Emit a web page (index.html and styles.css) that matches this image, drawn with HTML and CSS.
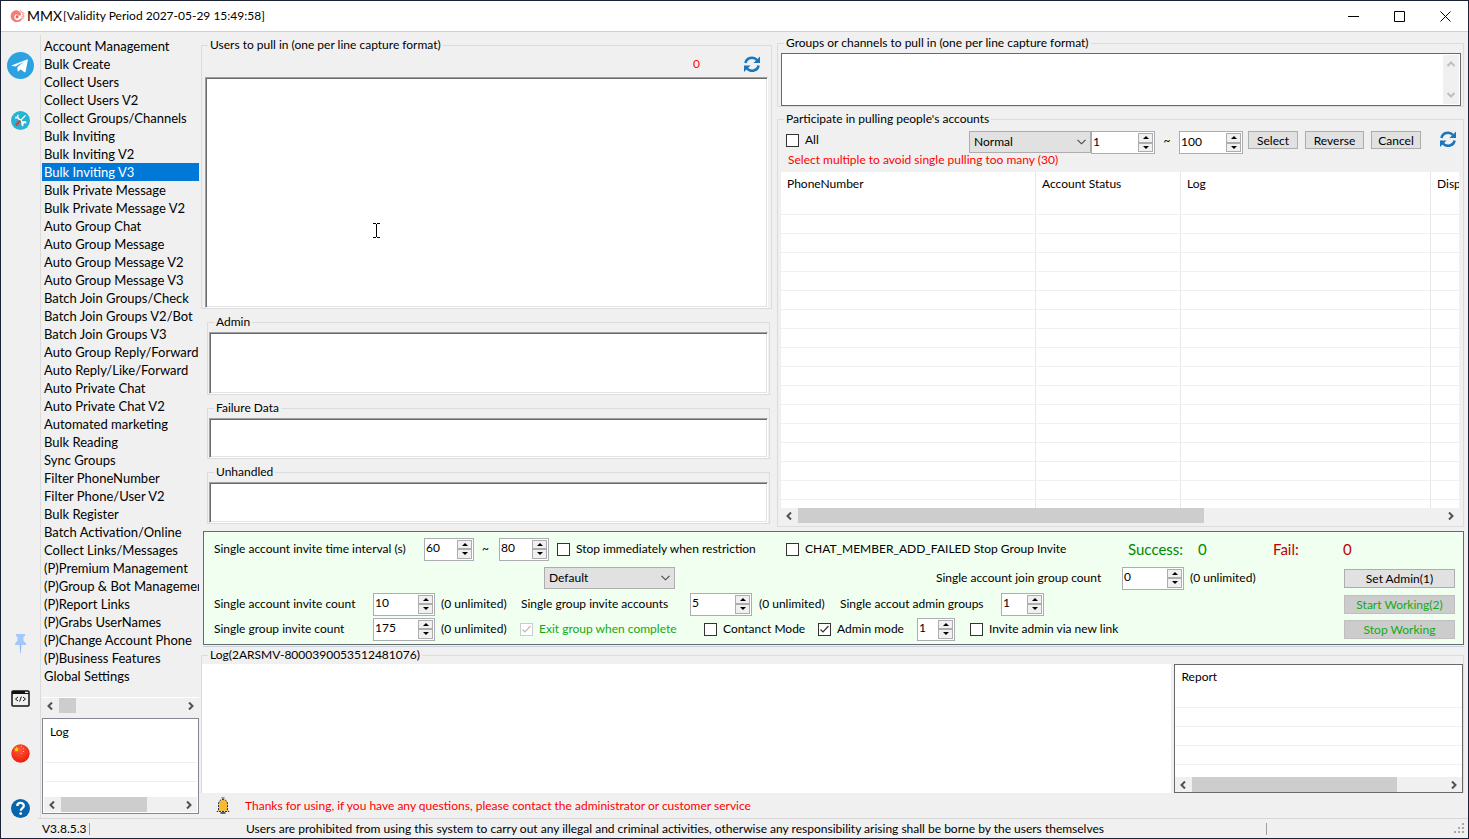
FILE: index.html
```html
<!DOCTYPE html>
<html lang="en">
<head>
    <meta charset="UTF-8">
    <meta name="viewport" content="width=device-width, initial-scale=1.0">
    <title>MMX</title>
    <link rel="stylesheet" href="styles.css">
</head>
<body>

<!-- shared icons -->
<svg class="sprite" aria-hidden="true">
  <symbol id="refresh" viewBox="0 0 16 16">
    <path d="M1.5 7a6.5 6 0 0 1 11.5-3" fill="none" stroke="#1b75bb" stroke-width="2.6"/>
    <path d="M16 0.5v6.5h-6.5z" fill="#1b75bb"/>
    <path d="M14.5 9.500a6.500 6 0 0 1-11.500 3" fill="none" stroke="#1b75bb" stroke-width="2.6"/>
    <path d="M0 16v-6.500h6.500z" fill="#1b75bb"/>
  </symbol>
  <symbol id="left" viewBox="0 0 8 8"><path d="M6 0.500 2.500 4 6 7.500" fill="none" stroke="#505050" stroke-width="2"/></symbol>
  <symbol id="right" viewBox="0 0 8 8"><path d="M2 0.500 5.500 4 2 7.500" fill="none" stroke="#505050" stroke-width="2"/></symbol>
  <symbol id="up" viewBox="0 0 8 8"><path d="M0.500 6 4 2.500 7.500 6" fill="none" stroke="#bfbfbf" stroke-width="2"/></symbol>
  <symbol id="down" viewBox="0 0 8 8"><path d="M0.500 2 4 5.500 7.500 2" fill="none" stroke="#bfbfbf" stroke-width="2"/></symbol>
</svg>

<header class="titlebar">
  <svg class="logo" viewBox="0 0 16 14">
    <path d="M5 1C2 2 0 5 1 9c1 3 4 5 7 4.500 3-.5 5-2.500 5-4.500l-2 1c-1 1.500-4 2-5.500.5C4 9 4.500 6 6.500 5.500 8 5 9 6 9 7l3-1C12 3 9 0 5 1z" fill="#f08078"/>
    <path d="M6.500 6.500c1.500-.8 3 .5 2.500 2-.5 1.200-2.500 1.200-3 0" fill="#e8605c"/>
    <path d="M11 1l1.500 2L15 4l-1.500 1.500L15 7l-3 1M13 9l2 .5" fill="none" stroke="#f3a29b" stroke-width="1.200"/>
  </svg>
  <h1>MMX</h1>
  <span class="validity">[Validity Period 2027-05-29 15:49:58]</span>
  <div class="window-buttons">
    <button type="button" aria-label="Minimize"><svg viewBox="0 0 11 11"><path d="M0 5.500h11"/></svg></button>
    <button type="button" aria-label="Maximize"><svg viewBox="0 0 11 11"><path d="M.5.5h10v10h-10z"/></svg></button>
    <button type="button" aria-label="Close"><svg viewBox="0 0 11 11"><path d="M.5.5l10 10M10.500.5l-10 10"/></svg></button>
  </div>
</header>

<div class="window">
  <nav class="iconbar">
    <button type="button" class="big" aria-label="Telegram">
      <svg viewBox="0 0 27 27"><circle cx="13.500" cy="13.500" r="13.500" fill="#2ca3e0"/><path d="M5 13.300 20 7.600c.8-.3 1 .2.8 1L18.600 19.500c-.2.9-.8 1-1.500.6l-3.600-2.800-2 2c-.4.4-.8.2-.8-.4l-.4-3.700L17 9.600l-8.600 5-3.400-.7c-.6-.2-.6-.4 0-.6z" fill="#fff"/></svg>
    </button>
    <button type="button" aria-label="Tools">
      <svg viewBox="0 0 19 19"><circle cx="9.500" cy="9.500" r="9.500" fill="#27b4d3"/><path d="M6 6l7 7" stroke="#fff" stroke-width="1.600"/><path d="M4.200 6.500a2 2 0 0 0 2.600-2.600M12.300 14.700a2 2 0 1 1 2.600-2.600" fill="none" stroke="#fff" stroke-width="1.600"/><path d="M14.500 4.300 9.500 9.500" stroke="#fff" stroke-width="1.200"/><path d="M8.600 10.400 5.600 13.500" stroke="#e2403a" stroke-width="2.800" stroke-linecap="round"/></svg>
    </button>
    <button type="button" class="pin" aria-label="Pin">
      <svg viewBox="0 0 19 19"><path d="M5 0h9v2l-1.500 1v3.500l2.500 3V11h-11V9.500l2.500-3V3L5 2z" fill="#a3c7fb"/><path d="M8.700 11h1.600L9.800 19h-.6z" fill="#8fb6f2"/></svg>
    </button>
    <button type="button" aria-label="Console">
      <svg viewBox="0 0 19 19"><rect x="1" y="2" width="17" height="15" rx="1" fill="none" stroke="#111" stroke-width="1.500"/><path d="M1 3h13" stroke="#111" stroke-width="2"/><path d="M1 4.500h17" stroke="#111"/><path d="M7 8l-2.500 2L7 12M12 8l2.500 2L12 12M10.400 7.500l-1.800 5" fill="none" stroke="#111"/></svg>
    </button>
    <button type="button" aria-label="Language">
      <svg viewBox="0 0 19 19"><defs><radialGradient id="ball" cx=".45" cy=".3" r=".7"><stop offset="0" stop-color="#ff5a3c"/><stop offset="1" stop-color="#ee1c0c"/></radialGradient></defs><circle cx="9.500" cy="9.500" r="9.200" fill="url(#ball)"/><path d="M5.500 2.500l.9 1.800 1.600.3-1.200 1.200.2 1.700-1.500-.6-2 .6.600-1.700L3 4.600l1.700-.2z" fill="#ffd400"/><path d="M10 2h1v1h-1zM12 4h1v1h-1zM12 7h1v1h-1zM10 9h1v1h-1z" fill="#ffc31e"/></svg>
    </button>
    <button type="button" aria-label="Help">
      <svg viewBox="0 0 19 19"><circle cx="9.500" cy="9.500" r="9.500" fill="#0565ad"/><path d="M6.300 7C6.300 3 12.800 3 12.800 6.800c0 2.400-3 2.400-3 5" fill="none" stroke="#fff" stroke-width="2.300"/><circle cx="9.700" cy="14.600" r="1.400" fill="#fff"/></svg>
    </button>
  </nav>

  <aside class="sidebar">
    <ul class="menu">
      <li><a href="#">Account Management</a></li>
      <li><a href="#">Bulk Create</a></li>
      <li><a href="#">Collect Users</a></li>
      <li><a href="#">Collect Users V2</a></li>
      <li><a href="#">Collect Groups/Channels</a></li>
      <li><a href="#">Bulk Inviting</a></li>
      <li><a href="#">Bulk Inviting V2</a></li>
      <li><a href="#" class="active">Bulk Inviting V3</a></li>
      <li><a href="#">Bulk Private Message</a></li>
      <li><a href="#">Bulk Private Message V2</a></li>
      <li><a href="#">Auto Group Chat</a></li>
      <li><a href="#">Auto Group Message</a></li>
      <li><a href="#">Auto Group Message V2</a></li>
      <li><a href="#">Auto Group Message V3</a></li>
      <li><a href="#">Batch Join Groups/Check</a></li>
      <li><a href="#">Batch Join Groups V2/Bot</a></li>
      <li><a href="#">Batch Join Groups V3</a></li>
      <li><a href="#">Auto Group Reply/Forward</a></li>
      <li><a href="#">Auto Reply/Like/Forward</a></li>
      <li><a href="#">Auto Private Chat</a></li>
      <li><a href="#">Auto Private Chat V2</a></li>
      <li><a href="#">Automated marketing</a></li>
      <li><a href="#">Bulk Reading</a></li>
      <li><a href="#">Sync Groups</a></li>
      <li><a href="#">Filter PhoneNumber</a></li>
      <li><a href="#">Filter Phone/User V2</a></li>
      <li><a href="#">Bulk Register</a></li>
      <li><a href="#">Batch Activation/Online</a></li>
      <li><a href="#">Collect Links/Messages</a></li>
      <li><a href="#">(P)Premium Management</a></li>
      <li><a href="#">(P)Group &amp; Bot Management</a></li>
      <li><a href="#">(P)Report Links</a></li>
      <li><a href="#">(P)Grabs UserNames</a></li>
      <li><a href="#">(P)Change Account Phone</a></li>
      <li><a href="#">(P)Business Features</a></li>
      <li><a href="#">Global Settings</a></li>
    </ul>
    <div class="scroll-x menu-scroll"><svg><use href="#left"/></svg><div class="track"><div class="thumb"></div></div><svg><use href="#right"/></svg></div>
    <div class="side-log">
      <div class="clip">
        <table class="grid">
          <thead><tr><th>Log</th></tr></thead>
          <tbody><tr><td></td></tr><tr><td></td></tr><tr><td></td></tr></tbody>
        </table>
      </div>
      <div class="scroll-x"><svg><use href="#left"/></svg><div class="track"><div class="thumb"></div></div><svg><use href="#right"/></svg></div>
    </div>
  </aside>

  <main class="workspace">
    <div class="top">
      <div class="left">
        <fieldset class="users">
          <legend><label for="users">Users to pull in (one per line capture format)</label></legend>
          <div class="users-head">
            <output class="count">0</output>
            <button type="button" class="refresh" aria-label="Refresh users"><svg><use href="#refresh"/></svg></button>
          </div>
          <textarea id="users" class="sunken"></textarea>
          <svg class="caret" viewBox="0 0 7 15"><path d="M0 .5h3M4 .5h3M3.500 1v13M0 14.500h3M4 14.500h3" stroke="#000" fill="none"/></svg>
        </fieldset>
        <fieldset class="small">
          <legend><label for="admin">Admin</label></legend>
          <textarea id="admin" class="sunken tall"></textarea>
        </fieldset>
        <fieldset class="small">
          <legend><label for="failure">Failure Data</label></legend>
          <textarea id="failure" class="sunken"></textarea>
        </fieldset>
        <fieldset class="small">
          <legend><label for="unhandled">Unhandled</label></legend>
          <textarea id="unhandled" class="sunken"></textarea>
        </fieldset>
      </div>

      <div class="right">
        <fieldset class="targets">
          <legend><label for="groups">Groups or channels to pull in (one per line capture format)</label></legend>
          <div class="target-box">
            <textarea id="groups"></textarea>
            <div class="scroll-y"><svg><use href="#up"/></svg><svg><use href="#down"/></svg></div>
          </div>
        </fieldset>
        <fieldset class="accounts">
          <legend>Participate in pulling people's accounts</legend>
          <div class="account-tools">
            <label class="check"><input type="checkbox">All</label>
            <select class="status" aria-label="Account status"><option>Normal</option></select>
            <div class="spin"><input type="text" value="1" aria-label="From"><div class="arrows"><button type="button" aria-label="Up"></button><button type="button" aria-label="Down"></button></div></div>
            <span class="tilde">~</span>
            <div class="spin"><input type="text" value="100" aria-label="To"><div class="arrows"><button type="button" aria-label="Up"></button><button type="button" aria-label="Down"></button></div></div>
            <div class="account-buttons">
              <button type="button" class="btn">Select</button>
              <button type="button" class="btn wide">Reverse</button>
              <button type="button" class="btn">Cancel</button>
            </div>
            <button type="button" class="refresh" aria-label="Refresh accounts"><svg><use href="#refresh"/></svg></button>
          </div>
          <p class="hint">Select multiple to avoid single pulling too many (30)</p>
          <div class="clip">
            <table class="grid account-grid">
              <colgroup><col class="c-phone"><col class="c-status"><col class="c-log"><col></colgroup>
              <thead><tr><th>PhoneNumber</th><th>Account Status</th><th>Log</th><th>Disp</th></tr></thead>
              <tbody>
                <tr><td></td><td></td><td></td><td></td></tr>
                <tr><td></td><td></td><td></td><td></td></tr>
                <tr><td></td><td></td><td></td><td></td></tr>
                <tr><td></td><td></td><td></td><td></td></tr>
                <tr><td></td><td></td><td></td><td></td></tr>
                <tr><td></td><td></td><td></td><td></td></tr>
                <tr><td></td><td></td><td></td><td></td></tr>
                <tr><td></td><td></td><td></td><td></td></tr>
                <tr><td></td><td></td><td></td><td></td></tr>
                <tr><td></td><td></td><td></td><td></td></tr>
                <tr><td></td><td></td><td></td><td></td></tr>
                <tr><td></td><td></td><td></td><td></td></tr>
                <tr><td></td><td></td><td></td><td></td></tr>
                <tr><td></td><td></td><td></td><td></td></tr>
                <tr><td></td><td></td><td></td><td></td></tr>
                <tr><td></td><td></td><td></td><td></td></tr>
                <tr><td></td><td></td><td></td><td></td></tr>
              </tbody>
            </table>
          </div>
          <div class="scroll-x"><svg><use href="#left"/></svg><div class="track"><div class="thumb"></div></div><svg><use href="#right"/></svg></div>
        </fieldset>
      </div>
    </div>

    <form class="options">
      <div class="row row1">
        <label for="from">Single account invite time interval (s)</label>
        <div class="spin s50"><input type="text" id="from" value="60"><div class="arrows"><button type="button" aria-label="Up"></button><button type="button" aria-label="Down"></button></div></div>
        <span>~</span>
        <div class="spin s50"><input type="text" value="80" aria-label="Interval to"><div class="arrows"><button type="button" aria-label="Up"></button><button type="button" aria-label="Down"></button></div></div>
        <label class="check"><input type="checkbox">Stop immediately when restriction</label>
        <label class="check"><input type="checkbox">CHAT_MEMBER_ADD_FAILED Stop Group Invite</label>
        <span class="total ok">Success:</span><span class="total ok">0</span>
        <span class="total bad">Fail:</span><span class="total bad">0</span>
      </div>
      <div class="row row2">
        <select class="mode" aria-label="Mode"><option>Default</option></select>
        <label for="join">Single account join group count</label>
        <div class="spin s62"><input type="text" id="join" value="0"><div class="arrows"><button type="button" aria-label="Up"></button><button type="button" aria-label="Down"></button></div></div>
        <span>(0 unlimited)</span>
        <button type="button" class="btn">Set Admin(1)</button>
      </div>
      <div class="row row3">
        <label for="invite">Single account invite count</label>
        <div class="spin s62"><input type="text" id="invite" value="10"><div class="arrows"><button type="button" aria-label="Up"></button><button type="button" aria-label="Down"></button></div></div>
        <span>(0 unlimited)</span>
        <label for="accounts">Single group invite accounts</label>
        <div class="spin s62"><input type="text" id="accounts" value="5"><div class="arrows"><button type="button" aria-label="Up"></button><button type="button" aria-label="Down"></button></div></div>
        <span>(0 unlimited)</span>
        <label for="admins">Single accout admin groups</label>
        <div class="spin s43"><input type="text" id="admins" value="1"><div class="arrows"><button type="button" aria-label="Up"></button><button type="button" aria-label="Down"></button></div></div>
        <button type="button" class="btn" disabled>Start Working(2)</button>
      </div>
      <div class="row row4">
        <label for="group">Single group invite count</label>
        <div class="spin s62"><input type="text" id="group" value="175"><div class="arrows"><button type="button" aria-label="Up"></button><button type="button" aria-label="Down"></button></div></div>
        <span>(0 unlimited)</span>
        <label class="check off"><input type="checkbox" checked disabled>Exit group when complete</label>
        <label class="check"><input type="checkbox">Contanct Mode</label>
        <label class="check"><input type="checkbox" checked>Admin mode</label>
        <div class="spin s38"><input type="text" value="1" aria-label="Admin count"><div class="arrows"><button type="button" aria-label="Up"></button><button type="button" aria-label="Down"></button></div></div>
        <label class="check"><input type="checkbox">Invite admin via new link</label>
        <button type="button" class="btn" disabled>Stop Working</button>
      </div>
    </form>

    <fieldset class="log">
      <legend>Log(2ARSMV-8000390053512481076)</legend>
      <div class="log-body">
        <div class="log-text"></div>
        <div class="report">
          <div class="clip">
            <table class="grid">
              <thead><tr><th>Report</th></tr></thead>
              <tbody><tr><td></td></tr><tr><td></td></tr><tr><td></td></tr><tr><td></td></tr><tr><td></td></tr></tbody>
            </table>
          </div>
          <div class="scroll-x"><svg><use href="#left"/></svg><div class="track"><div class="thumb"></div></div><svg><use href="#right"/></svg></div>
        </div>
      </div>
    </fieldset>

    <div class="notice">
      <svg viewBox="0 0 14 17"><path d="M7 .5v2" stroke="#17375e" stroke-width="3" stroke-dasharray="1 1"/><path d="M2.500 13V7c0-6 9-6 9 0v6l1.500 1.500H1z" fill="#f9b934" stroke="#17375e" stroke-dasharray="2 1"/><path d="M4.500 16h5" stroke="#17375e" stroke-width="1.500"/></svg>
      <span>Thanks for using, if you have any questions, please contact the administrator or customer service</span>
    </div>
  </main>
</div>

<footer class="statusbar">
  <span class="version">V3.8.5.3</span>
  <span class="warning">Users are prohibited from using this system to carry out any illegal and criminal activities, otherwise any responsibility arising shall be borne by the users themselves</span>
  <svg class="grip" viewBox="0 0 12 12"><path d="M9 0h2v2H9zM9 4h2v2H9zM9 8h2v2H9zM5 4h2v2H5zM5 8h2v2H5zM1 8h2v2H1z" fill="#a8a8a8"/></svg>
</footer>

</body>
</html>
```
FILE: styles.css
```css
* {
  box-sizing: border-box;
}

html,
body {
  margin: 0;
  height: 100%;
}

body {
  display: flex;
  flex-direction: column;
  border: 1px solid #1a2233;
  background: #f0f0f0;
  color: #000;
  font-family: Lato, "Open Sans", sans-serif;
  font-size: 12px;
  line-height: 16px;
  overflow: hidden;
}

button,
input,
select,
textarea {
  font: inherit;
  color: inherit;
  margin: 0;
  border-radius: 0;
}

button {
  padding: 0;
  border: 0;
  background: none;
}

svg {
  display: block;
}

.sprite {
  position: absolute;
  width: 0;
  height: 0;
}

/* title bar */

.titlebar {
  display: flex;
  align-items: center;
  height: 31px;
  padding-left: 9px;
  background: #fff;
  border-bottom: 1px solid #d0d0d0;
}

.logo {
  width: 15px;
  height: 14px;
}

.titlebar h1 {
  margin: 0 1px 0 2px;
  font-size: 14px;
  font-weight: 400;
}

.window-buttons {
  display: flex;
  margin-left: auto;
}

.window-buttons button {
  display: grid;
  place-items: center;
  width: 46px;
  height: 30px;
}

.window-buttons svg {
  width: 11px;
  height: 11px;
  fill: none;
  stroke: #000;
}

/* layout */

.window {
  flex: 1;
  display: flex;
  min-height: 0;
}

.iconbar {
  display: flex;
  flex-direction: column;
  align-items: center;
  gap: 36px;
  width: 40px;
  margin-top: 3px;
  padding: 17px 0 0;
  border-right: 1px solid #dcdcdc;
}

.iconbar svg {
  width: 19px;
  height: 19px;
}

.iconbar .big svg {
  width: 27px;
  height: 27px;
}

.iconbar .big {
  margin-bottom: -4px;
}

.iconbar .pin {
  margin-top: auto;
}

.sidebar {
  display: flex;
  flex-direction: column;
  width: 157px;
  padding: 5px 0 4px;
  margin-left: 1px;
}

.menu {
  flex: 1;
  margin: 0;
  padding: 0;
  list-style: none;
  overflow: hidden;
  font-size: 13px;
  border-bottom: 1px solid #fff;
}

.menu a {
  display: block;
  height: 18px;
  padding-left: 2px;
  line-height: 18px;
  color: #000;
  text-decoration: none;
  white-space: nowrap;
  overflow: hidden;
}

.menu a.active {
  background: #0078d7;
  color: #fff;
}

/* scroll bars */

.scroll-x {
  display: flex;
  align-items: center;
  height: 15px;
  padding: 0 4px;
  gap: 5px;
  background: #f0f0f0;
}

.scroll-x svg,
.scroll-y svg {
  flex: none;
  width: 8px;
  height: 8px;
}

.track {
  flex: 1;
  height: 15px;
}

.thumb {
  width: 63%;
  height: 100%;
  background: #cdcdcd;
}

.menu-scroll .thumb {
  width: 17px;
}

.side-log .thumb {
  width: 72%;
}

.report .thumb {
  width: 81%;
}

.scroll-y {
  display: flex;
  flex-direction: column;
  align-items: center;
  justify-content: space-between;
  width: 16px;
  margin: 1px;
  padding: 5px 0;
  background: #f0f0f0;
}

/* tables */

.clip {
  flex: 1;
  min-height: 0;
  overflow: hidden;
  background: #fff;
}

.grid {
  width: 100%;
  table-layout: fixed;
  border-collapse: separate;
  border-spacing: 0;
}

.grid th {
  height: 24px;
  padding: 0 0 0 6px;
  font-weight: 400;
  text-align: left;
  white-space: nowrap;
  overflow: hidden;
}

.grid td {
  height: 19px;
  padding: 0;
  border-bottom: 1px solid #f0f0f0;
}

.account-grid th,
.account-grid td {
  border-right: 1px solid #e8e8e8;
}

.account-grid th:last-child,
.account-grid td:last-child {
  border-right: 0;
}

.c-phone {
  width: 255px;
}

.c-status {
  width: 145px;
}

.c-log {
  width: 250px;
}

.side-log,
.report {
  display: flex;
  flex-direction: column;
  border: 1px solid #828790;
  background: #fff;
}

.side-log {
  height: 96px;
  margin-top: 5px;
  padding: 1px;
}

/* groups */

.workspace {
  flex: 1;
  display: flex;
  flex-direction: column;
  min-width: 0;
  margin: 0 4px 0 2px;
}

fieldset {
  min-width: 0;
  min-height: 0;
  margin: 0;
  border: 1px solid #dcdcdc;
}

legend {
  margin-left: 3px;
  padding: 0 2px;
  height: 16px;
}

textarea {
  display: block;
  width: 100%;
  resize: none;
  border: 0;
  outline: 0;
  background: #fff;
}

.sunken {
  border: 1px solid;
  border-color: #a0a0a0 #fff #fff #a0a0a0;
  box-shadow: inset 1px 1px #696969, inset -1px -1px #e3e3e3;
}

.top {
  flex: 1;
  display: flex;
  gap: 5px;
  min-height: 0;
  padding-bottom: 4px;
}

.left {
  flex: 571 1 0;
  display: flex;
  flex-direction: column;
  gap: 5px;
  padding: 5px 0 3px;
  min-width: 0;
}

.users {
  position: relative;
  flex: 1;
  padding: 0 3px 0 3px;
}

.users-head {
  display: flex;
  align-items: center;
  justify-content: flex-end;
  gap: 44px;
  height: 24px;
  padding: 0 8px 2px 0;
}

.count {
  color: #f00;
}

.users textarea {
  height: calc(100% - 24px);
}

.caret {
  position: absolute;
  left: 171px;
  top: 170px;
  width: 7px;
  height: 15px;
}

.refresh svg {
  width: 16px;
  height: 16px;
}

.small {
  margin: 0 2px 0 6px;
  padding: 2px 1px 0;
}

.small legend {
  margin-left: 5px;
}

.small textarea {
  height: 40px;
}

.small:last-child textarea {
  height: 41px;
}

.small textarea.tall {
  height: 62px;
}

.right {
  flex: 687 1 0;
  display: flex;
  flex-direction: column;
  gap: 4px;
  padding-top: 3px;
  min-width: 0;
}

.targets {
  padding: 2px 2px 0 3px;
}

.target-box {
  display: flex;
  height: 53px;
  border: 1px solid #696969;
  background: #fff;
}

.accounts {
  flex: 1;
  display: flex;
  flex-direction: column;
  padding: 4px 4px 3px 3px;
}

.account-tools {
  display: flex;
  align-items: flex-start;
  padding-left: 5px;
}

.account-tools .check {
  height: 18px;
}

.account-tools .spin {
  width: 64px;
}

.account-buttons {
  display: flex;
  gap: 7px;
  margin: 0 19px 0 5px;
}

.account-buttons .btn {
  width: 50px;
  height: 18px;
}

.account-buttons .wide {
  width: 59px;
}

.account-tools .refresh {
  margin-right: 3px;
}

.tilde {
  width: 24px;
  line-height: 20px;
  text-align: center;
}

.hint {
  margin: 0 0 6px 7px;
  color: #f00;
  line-height: 12px;
}

/* controls */

.check {
  display: flex;
  align-items: center;
  gap: 6px;
  white-space: nowrap;
}

.check input {
  appearance: none;
  flex: none;
  width: 13px;
  height: 13px;
  border: 1px solid #333;
  background: #fff;
}

.check input:checked {
  background: #fff url("data:image/svg+xml,%3Csvg xmlns='http://www.w3.org/2000/svg' viewBox='0 0 11 11'%3E%3Cpath d='M1.500 5.500 4 8l5.500-6' fill='none' stroke='%23333' stroke-width='1.200'/%3E%3C/svg%3E");
}

.check input:disabled {
  border-color: #ccc;
  background: #fff url("data:image/svg+xml,%3Csvg xmlns='http://www.w3.org/2000/svg' viewBox='0 0 11 11'%3E%3Cpath d='M1.500 5.500 4 8l5.500-6' fill='none' stroke='%23bbb' stroke-width='1.200'/%3E%3C/svg%3E");
}

.off {
  color: #13a913;
}

select {
  appearance: none;
  height: 22px;
  padding: 0 4px;
  border: 1px solid #adadad;
  background: #e1e1e1 url("data:image/svg+xml,%3Csvg xmlns='http://www.w3.org/2000/svg' viewBox='0 0 9 6'%3E%3Cpath d='M.5.8 4.500 4.800 8.500.8' fill='none' stroke='%23444' stroke-width='1.100'/%3E%3C/svg%3E") no-repeat right 4px center / 9px 6px;
}

.status {
  width: 122px;
  margin-left: auto;
}

.mode {
  width: 131px;
}

.spin {
  display: flex;
  height: 23px;
  border: 1px solid #abadb3;
  background: #fff;
}

.spin input {
  flex: 1;
  width: 0;
  height: 18px;
  padding: 0 0 0 1px;
  border: 0;
  outline: 0;
  background: none;
}

.arrows {
  display: flex;
  flex-direction: column;
  width: 15px;
  margin: 1px;
}

.arrows button {
  flex: 1;
  display: grid;
  place-items: center;
  border: 1px solid #adadad;
  background: #f0f0f0;
}

.arrows button::before {
  content: "";
  border: 3px solid transparent;
  border-top-width: 0;
  border-bottom-color: #000;
}

.arrows button:last-child::before {
  border-width: 3px 3px 0;
  border-color: #000 transparent;
}

.s50 {
  width: 50px;
}

.s62 {
  width: 62px;
}

.s43 {
  width: 43px;
}

.s38 {
  width: 38px;
}

.btn {
  padding-top: 1px;
  border: 1px solid #adadad;
  background: #e1e1e1;
  line-height: 16px;
  text-align: center;
  white-space: nowrap;
  overflow: hidden;
}

.btn:disabled {
  border-color: #bfbfbf;
  background: #ccc;
  color: #13a913;
}

/* options panel */

.options {
  margin-left: 2px;
  padding: 2px 8px 2px 10px;
  border: 1px solid #696969;
  background: #f0fff0;
  box-shadow: 0 1px #f0f0f0, 0 2px #c5d2e2;
  white-space: nowrap;
}

.row {
  display: grid;
  align-items: center;
}

.row1 {
  height: 30px;
  grid-template-columns: 210px 58px 17px 58px 229px 342px 70px 75px 70px 1fr;
}

.row2 {
  height: 28px;
  grid-template-columns: 392px 186px 68px 1fr 111px;
  padding-left: 330px;
}

.row3 {
  height: 24px;
  grid-template-columns: 159px 68px 80px 169px 69px 81px 161px 1fr 111px;
}

.row4 {
  height: 26px;
  grid-template-columns: 159px 68px 79px 184px 114px 99px 53px 1fr 111px;
}

.row > .btn {
  height: 19px;
}

.total {
  font-size: 15px;
  line-height: 20px;
}

.ok {
  color: #008a00;
}

.bad {
  color: #c00000;
}

/* log */

.log {
  margin-top: 2px;
  padding: 1px 0 0;
  border-bottom: 0;
}

.log legend {
  margin-left: 6px;
}

.log-body {
  display: flex;
  gap: 3px;
  height: 129px;
}

.log-text {
  flex: 971 1 0;
  background: #fff;
}

.report {
  flex: 287 1 0;
  border-color: #696969;
}

.notice {
  display: flex;
  align-items: center;
  gap: 15px;
  height: 25px;
  padding-left: 15px;
  color: #f00;
}

.notice svg {
  width: 14px;
  height: 17px;
}

/* status bar */

.statusbar {
  display: flex;
  align-items: center;
  height: 20px;
  margin-left: 37px;
  padding-left: 4px;
  border-top: 1px solid #d7d7d7;
  white-space: nowrap;
}

.version {
  width: 48px;
  height: 12px;
  line-height: 12px;
  border-right: 1px solid #a0a0a0;
}

.warning {
  width: 1177px;
  height: 12px;
  line-height: 12px;
  padding-left: 156px;
  border-right: 1px solid #a0a0a0;
}

.grip {
  width: 12px;
  height: 12px;
  margin: 0 3px 0 auto;
}
```
